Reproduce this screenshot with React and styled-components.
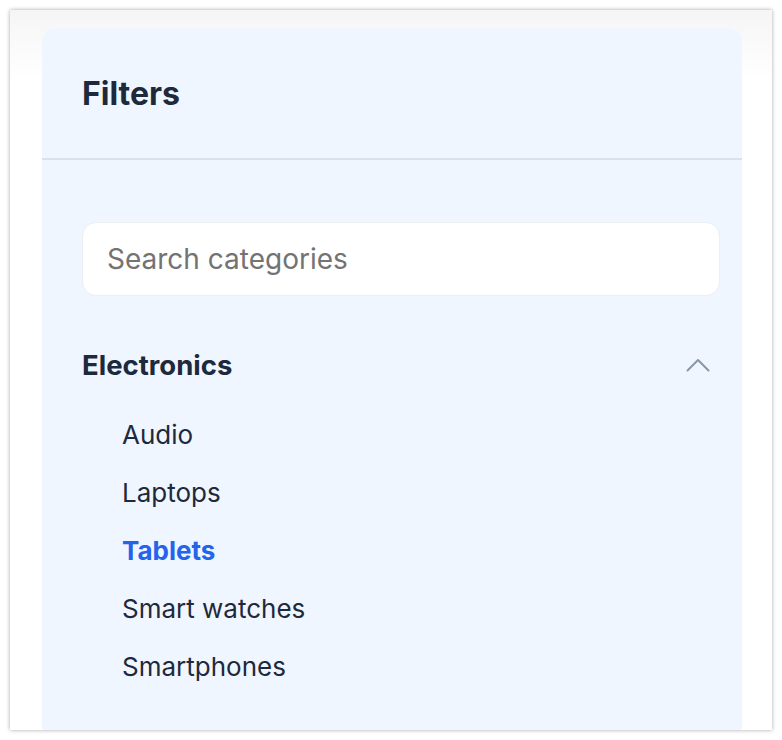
import styled, { createGlobalStyle } from "styled-components";

const GlobalStyle = createGlobalStyle`
  html, body {
    margin: 0;
    padding: 0;
    background: #fff;
    font-family: Inter, "Noto Sans", sans-serif;
  }
  * {
    box-sizing: border-box;
  }
`;

const categories = [
  {
    name: "Electronics",
    open: true,
    children: ["Audio", "Laptops", "Tablets", "Smart watches", "Smartphones"],
  },
];

const activeItem = "Tablets";

function ChevronUp() {
  return (
    <svg width="24" height="14" viewBox="0 0 24 14" fill="none">
      <path
        d="M1.5 12.5L12 2l10.5 10.5"
        stroke="#8a97a8"
        strokeWidth="2"
        strokeLinecap="round"
        strokeLinejoin="round"
      />
    </svg>
  );
}

export default function App() {
  return (
    <>
      <GlobalStyle />
      <Frame>
        <Panel>
          <PanelHeader>
            <Title>Filters</Title>
          </PanelHeader>
          <PanelBody>
            <SearchInput type="text" placeholder="Search categories" />
            {categories.map((cat) => (
              <Group key={cat.name}>
                <GroupHeader>
                  <GroupTitle>{cat.name}</GroupTitle>
                  <ChevronUp />
                </GroupHeader>
                {cat.open && (
                  <ItemList>
                    {cat.children.map((item) => (
                      <Item key={item} $active={item === activeItem}>
                        {item}
                      </Item>
                    ))}
                  </ItemList>
                )}
              </Group>
            ))}
          </PanelBody>
        </Panel>
      </Frame>
    </>
  );
}

const Frame = styled.div`
  margin: 10px;
  width: 762px;
  height: 720px;
  overflow: hidden;
  padding: 18px 30px 0 32px;
  background: linear-gradient(#f5f5f5 0, #ffffff 70px);
  box-shadow: 0 0 4px rgba(0, 0, 0, 0.35);
`;

const Panel = styled.div`
  height: 100%;
  background: #eff6ff;
  border-radius: 14px 14px 0 0;
  display: flex;
  flex-direction: column;
`;

const PanelHeader = styled.div`
  height: 132px;
  padding-left: 40px;
  display: flex;
  align-items: center;
  border-bottom: 2px solid #d9e2ec;
`;

const Title = styled.h2`
  margin: 0;
  font-size: 32px;
  font-weight: 700;
  color: #1e293b;
`;

const PanelBody = styled.div`
  padding: 62px 22px 0 40px;
`;

const SearchInput = styled.input`
  display: block;
  width: 100%;
  height: 74px;
  border: 1px solid #eceef1;
  border-radius: 14px;
  background: #fff;
  padding: 0 24px;
  font-family: Inter, "Noto Sans", sans-serif;
  font-size: 28px;
  color: #1e293b;
  outline: none;
  &::placeholder {
    color: #737373;
  }
`;

const Group = styled.div`
  margin-top: 48px;
`;

const GroupHeader = styled.div`
  display: flex;
  align-items: center;
  justify-content: space-between;
  padding-right: 10px;
  height: 42px;
`;

const GroupTitle = styled.span`
  font-size: 27.5px;
  font-weight: 700;
  color: #1e293b;
`;

const ItemList = styled.ul`
  list-style: none;
  margin: 29px 0 0;
  padding: 0 0 0 40px;
  display: flex;
  flex-direction: column;
  gap: 18px;
`;

const Item = styled.li`
  font-size: 26px;
  line-height: 40px;
  font-weight: ${(p) => (p.$active ? 700 : 400)};
  color: ${(p) => (p.$active ? "#2563eb" : "#1e293b")};
  cursor: pointer;
`;
